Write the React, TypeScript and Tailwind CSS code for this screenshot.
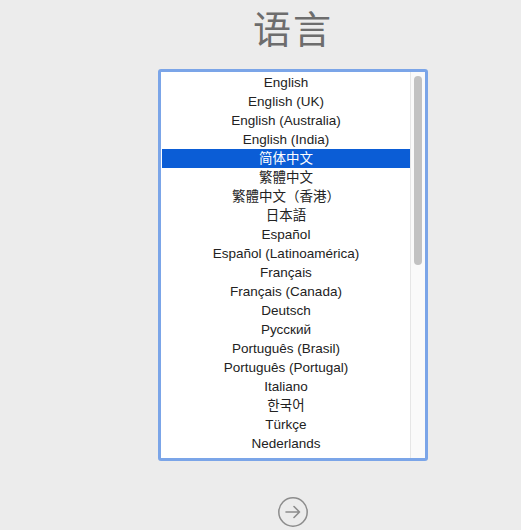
import React from "react";

const items = [
  "English",
  "English (UK)",
  "English (Australia)",
  "English (India)",
  "简体中文",
  "繁體中文",
  "繁體中文（香港）",
  "日本語",
  "Español",
  "Español (Latinoamérica)",
  "Français",
  "Français (Canada)",
  "Deutsch",
  "Русский",
  "Português (Brasil)",
  "Português (Portugal)",
  "Italiano",
  "한국어",
  "Türkçe",
  "Nederlands",
];

export default function App() {
  return (
    <div
      className="w-[521px] h-[530px] bg-[#ececec] overflow-hidden"
      style={{ fontFamily: '"Liberation Sans", "Noto Sans CJK SC", "Noto Sans CJK KR", sans-serif' }}
    >
      <div className="ml-[158px] w-[270px] flex flex-col items-center">
        <h1
          className="mt-[4px] h-[46px] text-[38px] leading-[46px] text-[#6d6d6d] tracking-[2px]"
          style={{ fontFamily: '"Noto Sans CJK SC", sans-serif' }}
        >
          语言
        </h1>
        <div className="mt-[19px] w-[270px] h-[392px] border-[3px] border-[#7ba5e8] rounded-[3px] bg-white flex overflow-hidden">
          <div className="flex-1 pl-[1px] pt-[0.5px] overflow-hidden">
            {items.map((it) => {
              const sel = it === "简体中文";
              return (
                <div
                  key={it}
                  className={
                    "h-[19px] leading-[19px] text-[13.5px] text-center whitespace-nowrap " +
                    (sel ? "bg-[#0b5dd6] text-white" : "text-[#222222]")
                  }
                >
                  {it}
                </div>
              );
            })}
          </div>
          <div className="w-[15px] bg-[#fafafa] border-l border-[#e6e6e6] pt-[4px] flex justify-center">
            <div className="w-[8px] h-[189px] rounded-full bg-[#c2c2c2]" />
          </div>
        </div>
        <div className="mt-[35px]">
          <svg width="32" height="32" viewBox="0 0 32 32" fill="none">
            <circle cx="16" cy="16" r="14.2" stroke="#8c8c8c" strokeWidth="1.5" />
            <path d="M9 16 H22.5 M17 10.5 L22.5 16 L17 21.5" stroke="#8c8c8c" strokeWidth="1.6" strokeLinecap="round" strokeLinejoin="round" />
          </svg>
        </div>
      </div>
    </div>
  );
}
